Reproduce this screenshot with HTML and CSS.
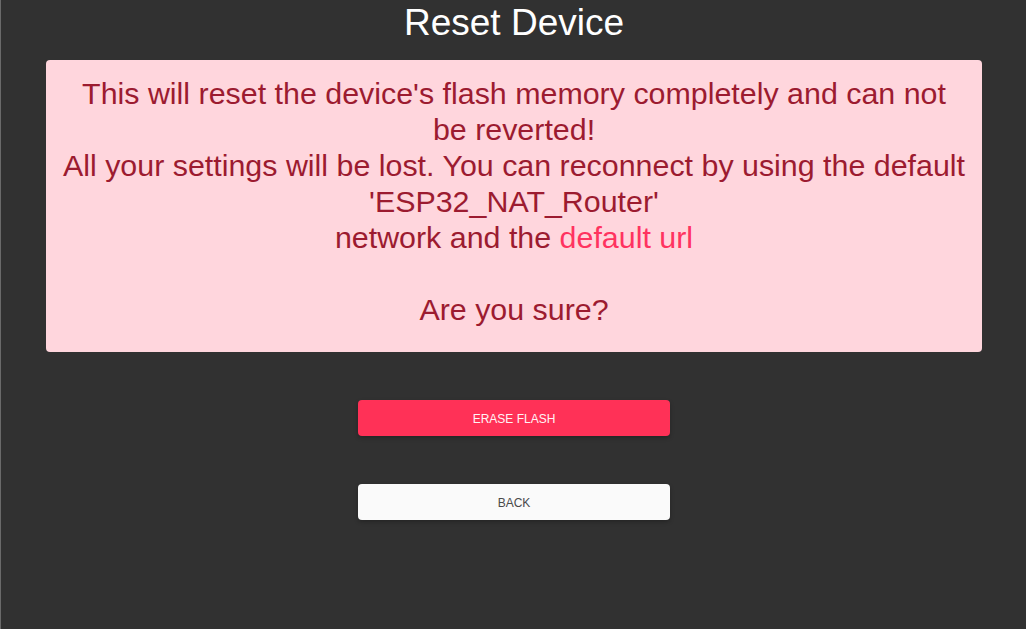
FILE: index.html
```html
<!DOCTYPE html>
<html>
<head>
<meta charset="utf-8">
<link rel="stylesheet" href="styles.css">
<title>Reset Device</title>
</head>
<body>
<main class="page">
  <h1 class="title">Reset Device</h1>
  <div class="alert">
    This will reset the device's flash memory completely and can not be reverted!<br>
    All your settings will be lost. You can reconnect by using the default 'ESP32_NAT_Router'<br>
    network and the <a class="link" href="#">default url</a><br>
    <br>
    Are you sure?
  </div>
  <div class="actions">
    <button class="btn btn-danger">ERASE FLASH</button>
    <button class="btn btn-light">BACK</button>
  </div>
</main>
</body>
</html>
```
FILE: styles.css
```css
html, body {
  margin: 0;
  padding: 0;
  height: 100%;
  background: #313131;
}
body {
  font-family: "Liberation Sans", Arial, sans-serif;
}
.page {
  box-sizing: border-box;
  min-height: 100%;
  border-left: 1px solid #6a6a6a;
  padding: 0 44px 0 45px;
  display: flex;
  flex-direction: column;
  align-items: stretch;
}
.title {
  margin: 0;
  height: 60px;
  padding-top: 1px;
  box-sizing: border-box;
  font-weight: normal;
  font-size: 37px;
  line-height: 44px;
  color: #ffffff;
  text-align: center;
}
.alert {
  background: #ffd6dd;
  color: #9c1b30;
  border-radius: 4px;
  padding: 15px 16px 25px;
  font-size: 30.4px;
  line-height: 36px;
  text-align: center;
}
.link {
  color: #ff3360;
  text-decoration: none;
}
.actions {
  display: flex;
  flex-direction: column;
  align-items: center;
  gap: 48px;
  padding-top: 48px;
}
.btn {
  width: 312px;
  height: 36px;
  padding: 2px 0 0;
  border: none;
  border-radius: 4px;
  font-family: "Liberation Sans", Arial, sans-serif;
  font-size: 12px;
  box-shadow: 0 2px 4px rgba(0,0,0,0.25);
  cursor: pointer;
}
.btn-danger {
  background: #ff3157;
  color: #fff3f5;
}
.btn-light {
  background: #fafafa;
  color: #4a4a4a;
}
```
